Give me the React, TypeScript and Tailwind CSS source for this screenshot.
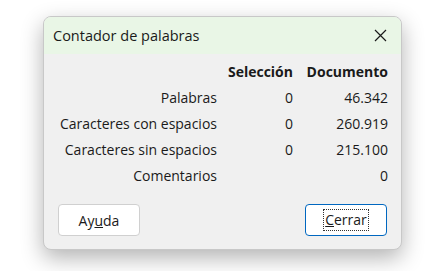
export default function App() {
  const rows = [
    { label: 'Palabras', sel: '0', doc: '46.342' },
    { label: 'Caracteres con espacios', sel: '0', doc: '260.919' },
    { label: 'Caracteres sin espacios', sel: '0', doc: '215.100' },
    { label: 'Comentarios', sel: '', doc: '0' },
  ];

  return (
    <div className="w-[438px] h-[271px] bg-white pt-4 pl-[43px]" style={{ fontFamily: '"Open Sans", "Noto Sans", sans-serif' }}>
      <div className="w-[359px] h-[234px] rounded-lg border border-[#c8c8c8] bg-[#f0f0f0] shadow-[0_8px_22px_rgba(0,0,0,0.3)] overflow-hidden flex flex-col text-[14px] text-[#1a1a1a]">
        <div className="h-[37px] bg-[#e9f6e6] flex items-center justify-between pl-[9px] pr-[14px]">
          <span className="text-[14.5px]">Contador de palabras</span>
          <svg width="13" height="13" viewBox="0 0 13 13" stroke="#1a1a1a" strokeWidth="1.2">
            <path d="M1 1L12 12M12 1L1 12" />
          </svg>
        </div>
        <div className="grid grid-cols-[173px_76px_95px] mt-[5px] leading-[26px]">
          <div />
          <div className="text-right font-bold">Selección</div>
          <div className="text-right font-bold">Documento</div>
          {rows.map(r => (
            <div key={r.label} className="contents">
              <div className="text-right">{r.label}</div>
              <div className="text-right">{r.sel}</div>
              <div className="text-right">{r.doc}</div>
            </div>
          ))}
        </div>
        <div className="flex justify-between px-[14px] mt-[15px]">
          <button className="w-[82px] h-[32px] bg-white border border-[#d0d0d0] rounded-[4px]">
            Ay<span className="underline">u</span>da
          </button>
          <button className="w-[82px] h-[32px] bg-white border border-[#0067c0] rounded-[4px] flex items-center justify-center">
            <span className="outline outline-1 outline-dotted outline-[#333] leading-[20px] px-[1px]">
              <span className="underline">C</span>errar
            </span>
          </button>
        </div>
      </div>
    </div>
  );
}
